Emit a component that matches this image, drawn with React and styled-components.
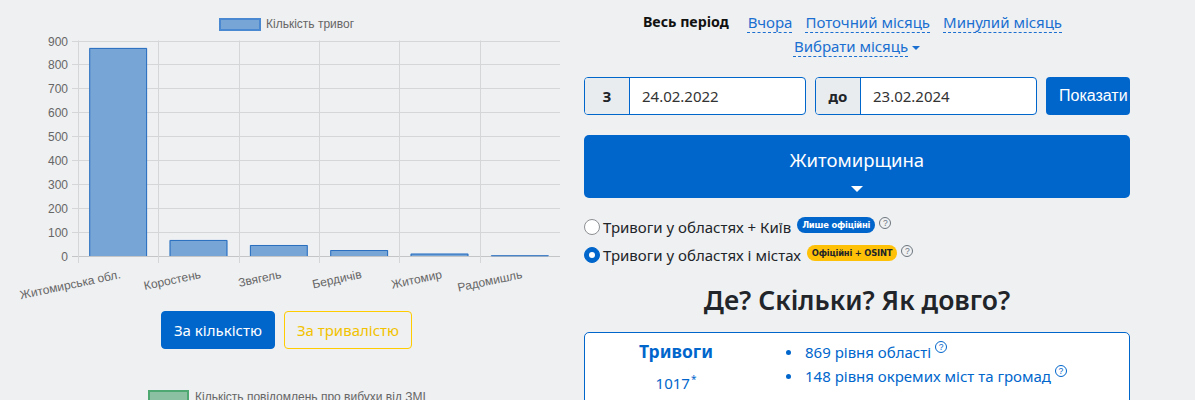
import React from "react";
import styled, { createGlobalStyle } from "styled-components";

const Global = createGlobalStyle`
  html, body { margin: 0; padding: 0; background: #eff0f2; }
  body { font-family: "Noto Sans", "Open Sans", sans-serif; color: #212529; }
  * { box-sizing: border-box; }
`;

const BLUE = "#0066cc";
const LINK = "#1a6fd0";

const Page = styled.div`
  display: grid;
  grid-template-columns: 573px 546px;
  column-gap: 11px;
  width: 1195px;
  height: 400px;
  overflow: hidden;
`;

const LeftCol = styled.div`
  display: flex;
  flex-direction: column;
  align-items: center;
`;

const RightCol = styled.div`
  display: flex;
  flex-direction: column;
  padding-top: 10px;
`;

const ChartSvg = styled.svg`
  display: block;
  font-family: "Liberation Sans", Arial, sans-serif;
`;

const ToggleRow = styled.div`
  display: flex;
  gap: 9px;
  margin-top: 11px;
`;

const ToggleBtn = styled.button`
  height: 38px;
  padding: 0 12px;
  border-radius: 4px;
  font-family: "Noto Sans", "Open Sans", sans-serif;
  font-size: 15px;
  cursor: pointer;
  border: 1px solid ${(p) => (p.$active ? BLUE : "#ffcc00")};
  background: ${(p) => (p.$active ? BLUE : "transparent")};
  color: ${(p) => (p.$active ? "#fff" : "#f2c200")};
`;

const SecondLegend = styled.svg`
  display: block;
  margin-top: 41px;
  font-family: "Liberation Sans", Arial, sans-serif;
`;

/* Right column */
const PeriodNav = styled.div`
  text-align: center;
  font-size: 15px;
  line-height: 24px;
`;

const PeriodLine = styled.div`
  display: flex;
  justify-content: center;
  gap: 13px;
  padding-right: ${(p) => p.$shift || 0}px;
`;

const PeriodCurrent = styled.span`
  font-weight: 700;
  font-size: 14.2px;
  color: #111;
  margin-right: 6px;
`;

const PeriodLink = styled.a`
  color: ${LINK};
  text-decoration: underline dashed;
  text-underline-offset: 4px;
  text-decoration-thickness: 1px;
  cursor: pointer;
`;

const Caret = styled.span`
  display: inline-block;
  width: 0;
  height: 0;
  margin-left: 4px;
  vertical-align: middle;
  border-left: 4px solid transparent;
  border-right: 4px solid transparent;
  border-top: 4px solid ${LINK};
`;

const DateRow = styled.div`
  display: flex;
  gap: 9px;
  margin-top: 19px;
  height: 38px;
`;

const InputGroup = styled.div`
  display: flex;
  width: 222px;
  border: 1px solid ${BLUE};
  border-radius: 4px;
  overflow: hidden;
  background: #fff;
`;

const Addon = styled.span`
  width: 45px;
  display: flex;
  align-items: center;
  justify-content: center;
  background: #e9ecef;
  border-right: 1px solid ${BLUE};
  font-weight: 700;
  font-size: 15px;
  color: #212529;
`;

const DateInput = styled.div`
  flex: 1;
  display: flex;
  align-items: center;
  padding-left: 12px;
  font-size: 15px;
  color: #333;
`;

const ShowBtn = styled.button`
  width: 84px;
  height: 38px;
  border: none;
  border-radius: 4px;
  background: ${BLUE};
  color: #fff;
  font-family: "Liberation Sans", Arial, sans-serif;
  font-size: 16px;
  text-align: left;
  padding: 0 0 0 13px;
  white-space: nowrap;
  overflow: hidden;
`;

const RegionBtn = styled.div`
  margin-top: 20px;
  height: 63px;
  border-radius: 5px;
  background: ${BLUE};
  color: #fff;
  display: flex;
  flex-direction: column;
  align-items: center;
  justify-content: flex-start;
  padding-top: 12px;
  font-size: 18.5px;
  line-height: 26px;
`;

const RegionCaret = styled.span`
  margin-top: 13px;
  width: 0;
  height: 0;
  border-left: 6px solid transparent;
  border-right: 6px solid transparent;
  border-top: 6px solid #fff;
`;

const RadioList = styled.div`
  margin-top: 15px;
  display: flex;
  flex-direction: column;
`;

const RadioRow = styled.label`
  display: flex;
  align-items: center;
  height: 28px;
  font-size: 15px;
  color: #212529;
`;

const RadioDot = styled.span`
  width: 16px;
  height: 16px;
  border-radius: 50%;
  margin-right: 3px;
  flex: none;
  background: ${(p) => (p.$checked ? BLUE : "#fff")};
  border: 1px solid ${(p) => (p.$checked ? BLUE : "#8c8f93")};
  display: flex;
  align-items: center;
  justify-content: center;
  &::after {
    content: "";
    width: 6px;
    height: 6px;
    border-radius: 50%;
    background: #fff;
    display: ${(p) => (p.$checked ? "block" : "none")};
  }
`;

const Badge = styled.span`
  display: inline-flex;
  align-items: center;
  height: 16px;
  padding: 0 5px;
  margin-left: 6px;
  margin-top: -5px;
  border-radius: 8px;
  font-family: "DejaVu Sans Condensed", "DejaVu Sans", sans-serif;
  font-weight: 700;
  font-size: 9.3px;
  letter-spacing: -0.2px;
  background: ${(p) => (p.$tone === "yellow" ? "#ffc107" : BLUE)};
  color: ${(p) => (p.$tone === "yellow" ? "#212529" : "#fff")};
`;

const Help = styled.span`
  display: inline-flex;
  align-items: center;
  justify-content: center;
  width: 12px;
  height: 12px;
  border-radius: 50%;
  border: 1px solid ${(p) => p.$color || "#6c757d"};
  color: ${(p) => p.$color || "#6c757d"};
  font-family: "Liberation Sans", Arial, sans-serif;
  font-size: 8.5px;
  line-height: 1;
  margin-left: ${(p) => p.$gap || 4}px;
  margin-top: ${(p) => p.$lift || -8}px;
  vertical-align: top;
  flex: none;
`;

const Heading = styled.h2`
  margin: 13px 0 0;
  text-align: center;
  font-size: 26.5px;
  font-weight: 600;
  line-height: 36px;
  color: #212529;
`;

const StatCard = styled.div`
  margin-top: 14px;
  height: 90px;
  background: #fff;
  border: 1px solid ${BLUE};
  border-radius: 5px;
  display: grid;
  grid-template-columns: 182px 1fr;
  color: ${BLUE};
`;

const StatTitleBox = styled.div`
  display: flex;
  flex-direction: column;
  align-items: center;
  padding-top: 6px;
`;

const StatTitle = styled.div`
  font-size: 17.5px;
  font-weight: 700;
  line-height: 24px;
`;

const StatTotal = styled.div`
  font-size: 15px;
  line-height: 24px;
  margin-top: 4px;
  sup { font-size: 10px; margin-left: 1px; }
`;

const StatList = styled.ul`
  margin: 0;
  padding: 7px 0 0 36px;
  font-size: 15px;
  line-height: 24px;
  list-style: disc;
  li::marker { font-size: 14px; }
`;

const StatItem = styled.li`
  padding-left: 2px;
`;

const bars = [
  { label: "Житомирська обл.", value: 869 },
  { label: "Коростень", value: 67 },
  { label: "Звягель", value: 46 },
  { label: "Бердичів", value: 25 },
  { label: "Житомир", value: 10 },
  { label: "Радомишль", value: 3 },
];

function AlarmChart() {
  const x0 = 78;
  const x1 = 560;
  const yTop = 40.5;
  const yBot = 256;
  const cw = (x1 - x0) / 6;
  const y = (v) => yBot - (v / 900) * (yBot - yTop);
  const ticks = [0, 100, 200, 300, 400, 500, 600, 700, 800, 900];
  const bw = cw * 0.72;
  return (
    <ChartSvg width="573" height="300" viewBox="0 0 573 300">
      <rect x="220" y="19" width="40" height="11" fill="#77a5d6" stroke="#4a88d2" strokeWidth="2" />
      <text x="266" y="28" fontSize="12" fill="#666">Кількість тривог</text>
      {ticks.map((t) => {
        const yy = Math.round(y(t)) + 0.5;
        return (
          <g key={t}>
            <line x1="72" x2={x1} y1={yy} y2={yy} stroke={t === 0 ? "#c4c5c7" : "#d5d6d8"} strokeWidth="1" />
            <text x="68" y={yy + 4} fontSize="12" fill="#666" textAnchor="end">{t}</text>
          </g>
        );
      })}
      {[0, 1, 2, 3, 4, 5].map((i) => {
        const xx = Math.round(x0 + i * cw) + 0.5;
        return <line key={i} x1={xx} x2={xx} y1={yTop} y2={263} stroke="#d5d6d8" strokeWidth="1" />;
      })}
      {bars.map((b, i) => {
        const bx = x0 + i * cw + (cw - bw) / 2;
        const by = y(b.value);
        return (
          <g key={b.label}>
            <rect x={bx} y={by} width={bw} height={yBot - by} fill="#77a5d6" />
            <path d={`M${bx + 0.5} ${yBot} V${by + 0.5} H${bx + bw - 0.5} V${yBot}`} fill="none" stroke="#2a6fc0" strokeWidth="1" />
          </g>
        );
      })}
      {bars.map((b, i) => {
        const cx = x0 + (i + 0.5) * cw + 3;
        return (
          <text key={b.label} transform={`translate(${cx} 278) rotate(-12)`} fontSize="12" fill="#666" textAnchor="end">
            {b.label}
          </text>
        );
      })}
    </ChartSvg>
  );
}

export default function App() {
  return (
    <>
      <Global />
      <Page>
        <LeftCol>
          <AlarmChart />
          <ToggleRow>
            <ToggleBtn $active>За кількістю</ToggleBtn>
            <ToggleBtn>За тривалістю</ToggleBtn>
          </ToggleRow>
          <SecondLegend width="573" height="20" viewBox="0 0 573 20">
            <rect x="149" y="1" width="39" height="12" fill="#8cc0a2" stroke="#4ea872" strokeWidth="2" />
            <text x="195" y="11" fontSize="12" fill="#666">Кількість повідомлень про вибухи від ЗМІ</text>
          </SecondLegend>
        </LeftCol>
        <RightCol>
          <PeriodNav>
            <PeriodLine $shift={9}>
              <PeriodCurrent>Весь період</PeriodCurrent>
              <PeriodLink>Вчора</PeriodLink>
              <PeriodLink>Поточний місяць</PeriodLink>
              <PeriodLink>Минулий місяць</PeriodLink>
            </PeriodLine>
            <PeriodLine>
              <span>
                <PeriodLink>Вибрати місяць</PeriodLink>
                <Caret />
              </span>
            </PeriodLine>
          </PeriodNav>
          <DateRow>
            <InputGroup>
              <Addon>З</Addon>
              <DateInput>24.02.2022</DateInput>
            </InputGroup>
            <InputGroup>
              <Addon>до</Addon>
              <DateInput>23.02.2024</DateInput>
            </InputGroup>
            <ShowBtn>Показати</ShowBtn>
          </DateRow>
          <RegionBtn>
            Житомирщина
            <RegionCaret />
          </RegionBtn>
          <RadioList>
            <RadioRow>
              <RadioDot />
              Тривоги у областях + Київ
              <Badge>Лише офіційні</Badge>
              <Help>?</Help>
            </RadioRow>
            <RadioRow>
              <RadioDot $checked />
              Тривоги у областях і містах
              <Badge $tone="yellow">Офіційні + OSINT</Badge>
              <Help>?</Help>
            </RadioRow>
          </RadioList>
          <Heading>Де? Скільки? Як довго?</Heading>
          <StatCard>
            <StatTitleBox>
              <StatTitle>Тривоги</StatTitle>
              <StatTotal>
                1017<sup>*</sup>
              </StatTotal>
            </StatTitleBox>
            <StatList>
              <StatItem>
                869 рівня області
                <Help $color={BLUE} $gap={4} $lift={1}>?</Help>
              </StatItem>
              <StatItem>
                148 рівня окремих міст та громад
                <Help $color={BLUE} $gap={4} $lift={1}>?</Help>
              </StatItem>
            </StatList>
          </StatCard>
        </RightCol>
      </Page>
    </>
  );
}
